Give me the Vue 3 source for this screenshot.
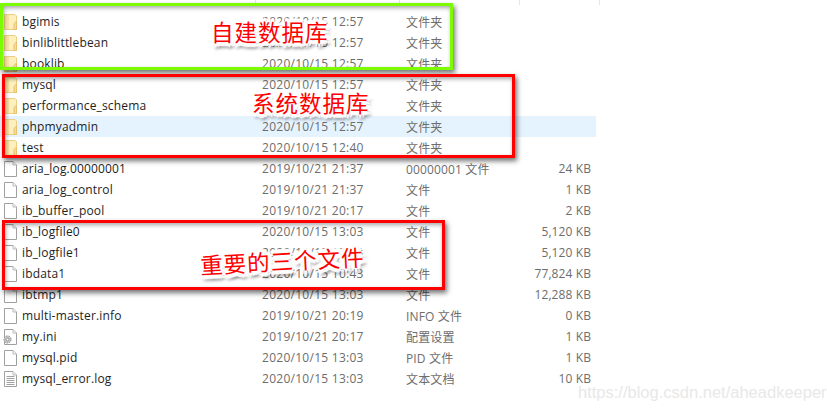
<script setup>
const rows = [
  { name: 'bgimis', date: '2020/10/15 12:57', type: '文件夹', size: '', icon: 'folder' },
  { name: 'binliblittlebean', date: '2020/10/15 12:57', type: '文件夹', size: '', icon: 'folder' },
  { name: 'booklib', date: '2020/10/15 12:57', type: '文件夹', size: '', icon: 'folder' },
  { name: 'mysql', date: '2020/10/15 12:57', type: '文件夹', size: '', icon: 'folder' },
  { name: 'performance_schema', date: '2020/10/15 12:57', type: '文件夹', size: '', icon: 'folder' },
  { name: 'phpmyadmin', date: '2020/10/15 12:57', type: '文件夹', size: '', icon: 'folder', hover: true },
  { name: 'test', date: '2020/10/15 12:40', type: '文件夹', size: '', icon: 'folder' },
  { name: 'aria_log.00000001', date: '2019/10/21 21:37', type: '00000001 文件', size: '24 KB', icon: 'file' },
  { name: 'aria_log_control', date: '2019/10/21 21:37', type: '文件', size: '1 KB', icon: 'file' },
  { name: 'ib_buffer_pool', date: '2019/10/21 20:17', type: '文件', size: '2 KB', icon: 'file' },
  { name: 'ib_logfile0', date: '2020/10/15 13:03', type: '文件', size: '5,120 KB', icon: 'file' },
  { name: 'ib_logfile1', date: '2020/10/15 13:03', type: '文件', size: '5,120 KB', icon: 'file' },
  { name: 'ibdata1', date: '2020/10/15 10:43', type: '文件', size: '77,824 KB', icon: 'file' },
  { name: 'ibtmp1', date: '2020/10/15 13:03', type: '文件', size: '12,288 KB', icon: 'file' },
  { name: 'multi-master.info', date: '2019/10/21 20:19', type: 'INFO 文件', size: '0 KB', icon: 'file' },
  { name: 'my.ini', date: '2019/10/21 20:17', type: '配置设置', size: '1 KB', icon: 'ini' },
  { name: 'mysql.pid', date: '2020/10/15 13:03', type: 'PID 文件', size: '1 KB', icon: 'file' },
  { name: 'mysql_error.log', date: '2020/10/15 13:03', type: '文本文档', size: '10 KB', icon: 'log' },
];
</script>

<template>
  <div class="page">
    <div class="col-lines">
      <span class="sep" style="left: 255px"></span>
      <span class="sep" style="left: 399px"></span>
      <span class="sep" style="left: 519px"></span>
      <span class="sep" style="left: 599px"></span>
    </div>

    <div class="list">
      <div v-for="row in rows" :key="row.name" class="row" :class="{ hover: row.hover }">
        <span class="icon">
          <svg v-if="row.icon === 'folder'" width="16" height="16" viewBox="0 0 16 16">
            <path d="M1.5 0.5H12L13.5 2V15.5H1.5Z" fill="#fdf0bd" stroke="#eccf85" />
            <rect x="2" y="1" width="4" height="14" fill="#f8e2a0" />
            <path d="M11 15.5V9.5L13.5 7V15.5Z" fill="#f7dd94" stroke="#e8c270" />
          </svg>
          <svg v-else width="16" height="16" viewBox="0 0 16 16">
            <path d="M1.5 0.5H10L13.5 4V15.5H1.5Z" fill="#fff" stroke="#a0a0a0" />
            <path d="M10 0.5V4H13.5" fill="#f2f2f2" stroke="#bababa" />
            <g v-if="row.icon === 'log'" stroke="#a0a0a0">
              <path d="M3.5 5.5H11.5M3.5 7.5H11.5M3.5 9.5H11.5M3.5 11.5H11.5M3.5 13.5H11.5" />
            </g>
            <g v-if="row.icon === 'ini'">
              <circle cx="4.5" cy="10.5" r="3.6" fill="#c8c8c8" stroke="#909090" stroke-dasharray="1.5 1" />
              <circle cx="4.5" cy="10.5" r="1.4" fill="#fff" stroke="#909090" />
            </g>
          </svg>
        </span>
        <span class="name">{{ row.name }}</span>
        <span class="date">{{ row.date }}</span>
        <span class="type">{{ row.type }}</span>
        <span class="size">{{ row.size }}</span>
      </div>
    </div>

    <div class="box green"></div>
    <div class="box red sys"></div>
    <div class="box red files"></div>

    <div class="label l1">自建数据库</div>
    <div class="label l2">系统数据库</div>
    <div class="label l3">重要的三个文件</div>

    <div class="mark">https://blog.csdn.net/aheadkeeper</div>
  </div>
</template>

<style scoped>
.page {
  position: relative;
  width: 827px;
  height: 410px;
  overflow: hidden;
  background: #fff;
  font-family: "Open Sans", "Noto Sans CJK SC", sans-serif;
  font-size: 12px;
}

.sep {
  position: absolute;
  top: 0;
  width: 1px;
  height: 5px;
  background: #e5e5e5;
}

.list {
  display: flex;
  flex-direction: column;
  padding-top: 11px;
}

.row {
  display: flex;
  align-items: center;
  width: 596px;
  height: 21px;
  color: #6d6d6d;
  white-space: nowrap;
}

.row.hover {
  background: #e5f3ff;
}

.icon {
  display: flex;
  width: 16px;
  height: 16px;
  margin-left: 3px;
  margin-right: 3px;
}

.name {
  width: 240px;
  color: #1e1e1e;
  letter-spacing: 0.16px;
}

.date {
  width: 144px;
  letter-spacing: 0.27px;
}

.type {
  width: 120px;
  letter-spacing: 0.15px;
}

.size {
  width: 65px;
  text-align: right;
  letter-spacing: 0.1px;
}

.box {
  position: absolute;
  box-sizing: border-box;
  border: 3px solid #f00;
  box-shadow: 2px 3px 5px rgba(0, 0, 0, 0.55), inset 1px 2px 4px rgba(0, 0, 0, 0.35);
}

.green {
  left: 0;
  top: 3px;
  width: 453px;
  height: 67px;
  border-color: #7cfc00;
}

.sys {
  left: 2px;
  top: 74px;
  width: 513px;
  height: 84px;
}

.files {
  left: 2px;
  top: 220px;
  width: 443px;
  height: 70px;
}

.label {
  position: absolute;
  color: #f00;
  font-size: 22.5px;
  line-height: 28px;
  letter-spacing: 1px;
  white-space: nowrap;
  font-family: "Noto Sans CJK SC", sans-serif;
  font-weight: 400;
  text-shadow:
    4px 0 1px #fff, -4px 0 1px #fff, 0 4px 1px #fff, 0 -4px 1px #fff,
    3px 3px 1px #fff, -3px 3px 1px #fff, 3px -3px 1px #fff, -3px -3px 1px #fff,
    2px 0 0 #fff, -2px 0 0 #fff, 0 2px 0 #fff, 0 -2px 0 #fff,
    1px 6px 3px rgba(0, 0, 0, 0.35), 4px 5px 3px rgba(0, 0, 0, 0.35);
}

.l1 {
  left: 211px;
  top: 17px;
}

.l2 {
  left: 252px;
  top: 88px;
}

.l3 {
  left: 200px;
  top: 246px;
  transform: rotate(-3deg);
}

.mark {
  position: absolute;
  left: 578px;
  top: 382px;
  font-family: "Liberation Sans", sans-serif;
  font-size: 16.5px;
  line-height: 20px;
  color: #e8e8e8;
  white-space: nowrap;
}
</style>
